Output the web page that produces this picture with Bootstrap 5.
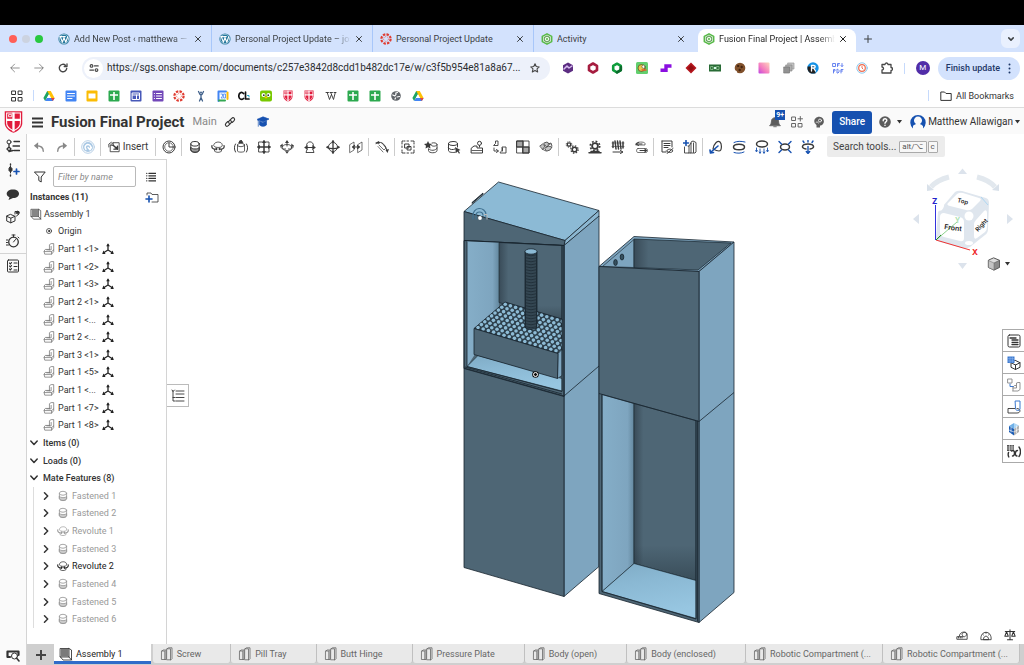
<!DOCTYPE html>
<html lang="en">
<head>
<meta charset="utf-8">
<meta name="viewport" content="width=device-width, initial-scale=1">
<title>Fusion Final Project | Assembly 1</title>
<link href="https://cdn.jsdelivr.net/npm/bootstrap@5.3.0/dist/css/bootstrap.min.css" rel="stylesheet">
<style>
:root{--ink:#333;--line:#d4d4d4;--onblue:#1651b0}
body{font-family:Roboto,"Liberation Sans",sans-serif;font-size:9px;line-height:12px;color:var(--ink);background:#fff;overflow:hidden}
svg{display:block;flex:none}
button,.btn{font-size:inherit;line-height:inherit}
.ib{border:0;background:none;padding:0;color:inherit;display:flex;align-items:center;justify-content:center;flex:none}
.i{width:14px;height:14px;fill:none;stroke:currentColor;stroke-width:1;stroke-linejoin:round;stroke-linecap:round}
.i12{width:12px;height:12px}.i10{width:10px;height:10px}.i8{width:8px;height:8px}
.i6{width:6px;height:6px}
.bold{stroke-width:1.6}
.screentop{height:25px;background:#000}
.tabstrip{height:27px;background:#d3e2fd;padding:0 4px 0 9px;color:#3c4043;font-size:9px}
.lights{width:42px;gap:5px}
.lights span{width:8px;height:8px;border-radius:50%}
.btab{flex:0 1 161px;min-width:0;height:27px;padding:0 9px 0 7px;gap:4px;border-right:1px solid #a8c7fa;color:inherit;text-decoration:none}
.sepless{border-right-color:transparent}
.btab .label{flex:1;min-width:0;overflow:hidden;white-space:nowrap}
.fade-r{-webkit-mask-image:linear-gradient(90deg,#000 86%,transparent);mask-image:linear-gradient(90deg,#000 86%,transparent)}
.active-tab{background:#fff;border-radius:8px 8px 0 0;border:0;color:#1f1f1f;flex-basis:158px;padding-left:5px;margin:4px 0 0 3px;height:23px;padding-bottom:4px}
.chev{width:19px;height:19px;border-radius:6px;background:#e9f0fe}
.navrow{height:32px;padding:0 4px 0 9px;color:#474747}
.addr{flex:0 1 468px;height:23px;background:#edf1fa;border-radius:12px;padding:0 10px 0 2px;margin-left:14px;gap:4px}
.addr .site{width:19px;height:19px;border-radius:50%;background:#fff}
.addr input{border:0;background:none;flex:1;min-width:0;padding:0;color:#2b2d30;font-size:10px;text-overflow:ellipsis;outline:0}
.exts{flex:0 1 331px;margin-left:12px}
.avatar{width:14px;height:14px;border-radius:50%;background:#512da8;color:#fff;font-size:8px}
.finish{height:23px;border:0;border-radius:12px;background:#d3e2fd;color:#1d3767;font-size:9px;font-weight:500;padding:0 9px 0 8px;gap:8px}
.marks{height:24px;padding:0 10px 0 11px;border-bottom:1px solid #dcdcdc}
.marks ul{flex:0 1 381px;margin:0}
.vline{width:1px;height:11px;background:#c6dafc}
.ohead{height:26px;background:#fafafa;padding:2px 4px 0}
.doc{font-size:15px;line-height:20px;font-weight:700}
.branch{margin-left:8px;font-size:11px;color:#888}
.badge9{position:absolute;left:6px;top:-6px;background:var(--onblue);color:#fff;font-size:7px;line-height:10px;padding:0 1px;font-weight:700}
.share{background:var(--onblue);color:#fff;border:0;border-radius:3px;width:40px;height:23px;font-size:10px;font-weight:500}
.rail{width:27px;background:#fafafa;border-right:1px solid var(--line);color:#333}
.rail .ib{width:26px;height:24px}
.tools{height:25px;color:#3a3a3a}
.tools .ib{width:23px;height:23px}
.tsep{width:1px;height:18px;background:#ccc;margin:0 1px;flex:none}
.searchbox{background:#ececec;border:0;border-radius:2px;height:21px;font-size:10px;padding:0 7px 0 6px;color:#444;gap:1px;white-space:nowrap}
.searchbox kbd{background:#f7f7f7;color:#555;border:1px solid #aaa;border-radius:1px;font:8px/10px Roboto,sans-serif;padding:0 2px}
.panel{width:140px;border-right:1px solid var(--line);border-top:1px solid var(--line);flex:none;padding-bottom:16px}
.filter{padding:4px 10px 0 7px;height:29px}
.filter input{width:83px;height:21px;border:1px solid #b9b9b9;border-radius:2px;padding:0 4px;font-size:9px;font-style:italic;margin:0 10px 0 7px}
.filter input::placeholder{color:#8a8a8a}
.insthead{padding:0 7px 0 3px;height:16px}
.tree{flex:1;margin:0;padding:0;list-style:none}
.tree li{flex:1 1 0;display:flex;align-items:center;white-space:nowrap}
.tree .lv0{padding-left:3px;gap:2px}
.tree .lv1{padding-left:16px;gap:3px}
.tree .lv1 .i:first-child{color:#777}
.tree .lv1 .i:last-child{color:#222}
.tree .nm{width:41px}
.tree .lv2{margin-left:6px;border-left:1px solid #ddd;padding-left:4px;gap:3px;color:#999}
.tree .lv2 .ib{width:16px;color:#333}
.tree .on{color:#222}
.sect{padding-left:3px;gap:5px;font-weight:500}
.stage{flex:1;min-width:0;position:relative}
.stage .model{position:absolute;inset:0;width:100%;height:100%}
.flyout{position:absolute;left:0;top:225px;width:22px;height:23px;border:1px solid #bbb;border-left:0;background:#fff}
.cube{position:absolute;right:6px;top:6px}
.cubemenu{position:absolute;right:13px;top:98px;gap:4px}
.dock{position:absolute;right:0;top:170px;width:22px;border:1px solid #aaa;border-right:0;background:#fff}
.dock .ib{height:22px;width:21px;border-bottom:1px solid #aaa}
.dock .ib:last-child{border:0}
.measure{position:absolute;right:8px;bottom:3px;gap:12px}
.tabbar{height:21px;background:#cfcfcf;overflow:hidden;color:#666}
.otab{flex:none;height:19px;background:#e9e9e9;border-right:1px solid #c0c0c0;border-radius:0 0 3px 3px;padding:1px 29px 0 7px;gap:3px;color:inherit;text-decoration:none;font-size:9px;white-space:nowrap}
.otab.long{padding-right:11px}
.otab.cur{background:#fff;color:#222;border:0;border-bottom:3px solid #2f6cc9;border-radius:0;height:20px;padding:2px 28px 0 5px;margin-right:2px}
.plus{width:27px;height:21px;color:#444}
</style>
</head>
<body class="d-flex flex-column vh-100">
<svg width="0" height="0" class="position-absolute" aria-hidden="true">
<defs>
<symbol id="x" viewBox="0 0 8 8"><path d="M1.500 1.500l5 5M6.500 1.500l-5 5"/></symbol>
<symbol id="wp" viewBox="0 0 12 12"><circle cx="6" cy="6" r="5.600" fill="#21759b" stroke="none"/><circle cx="6" cy="6" r="4.700" fill="none" stroke="#fff" stroke-width=".5"/><path d="M2.300 3.600l2.100 5.600L6 4.600l1.800 4.600 1.900-5.400M1.800 3.600h2.400M5 3.600h2.300" fill="none" stroke="#fff" stroke-width="1.100"/></symbol>
<symbol id="canvas" viewBox="0 0 12 12"><circle cx="6" cy="6" r="4.600" fill="none" stroke="#e03c31" stroke-width="2.200" stroke-dasharray="2.400 1.200" stroke-linecap="butt"/><circle cx="6" cy="6" r="2.400" fill="none" stroke="#e03c31" stroke-width=".8" stroke-dasharray=".8 1.100" stroke-linecap="butt"/></symbol>
<symbol id="onshape" viewBox="0 0 12 12"><path d="M6 .8l4.700 2.600v5.200L6 11.200 1.300 8.600V3.400z" fill="#eef8ea" stroke="#57b947" stroke-width="1.500"/><path d="M6 3l2.700 1.500v3L6 9 3.300 7.500v-3z" fill="none" stroke="#5e9f58" stroke-width="1.100"/><circle cx="6" cy="6" r="1" fill="#57b947" stroke="none"/></symbol>
<symbol id="drive" viewBox="0 0 12 12"><path d="M4.200 1h3.600L4 7.600 2.100 11 .4 8z" fill="#1fa463" stroke="none"/><path d="M4.200 1h3.600l3.800 7H8z" fill="#ffc107" stroke="none"/><path d="M11.600 8L9.900 11H2.100l1.800-3z" fill="#4285f4" stroke="none"/><path d="M8 8h3.600L9.900 11z" fill="#ea4335" stroke="none"/><path d="M6 4.400L8 8H4z" fill="#fff" stroke="none"/></symbol>
<symbol id="doc" viewBox="0 0 12 12"><rect x=".5" y=".5" width="11" height="11" rx="1" fill="#4285f4" stroke="none"/><path d="M2.500 3.500h7M2.500 6h7M2.500 8.500h4.500" stroke="#fff"/></symbol>
<symbol id="slides" viewBox="0 0 12 12"><rect x=".5" y=".5" width="11" height="11" rx="1" fill="#fbbc04" stroke="none"/><rect x="2.500" y="3.500" width="7" height="5" fill="#fff" stroke="none"/></symbol>
<symbol id="sheet" viewBox="0 0 12 12"><rect x=".5" y=".5" width="11" height="11" rx="1" fill="#2ca94f" stroke="none"/><path d="M2 5h8M6 2v8" stroke="#fff" stroke-width="1.600" stroke-linecap="butt"/></symbol>
<symbol id="sites" viewBox="0 0 12 12"><rect x=".5" y=".5" width="11" height="11" rx="1" fill="#4758b8" stroke="none"/><path d="M2.500 3h7v6.500h-7zM2.500 5h7M6.500 5v4" stroke="#fff" fill="none"/></symbol>
<symbol id="forms" viewBox="0 0 12 12"><rect x=".5" y=".5" width="11" height="11" rx="1" fill="#7248b9" stroke="none"/><path d="M4.500 3.500H9.500M4.500 6H9.500M4.500 8.500H9.500M2.300 3.500h.2M2.300 6h.2M2.300 8.500h.2" stroke="#fff"/></symbol>
<symbol id="shieldr" viewBox="0 0 18 22"><path d="M.7.7h16.600v11.500c0 4.500-4.600 7.700-8.300 9.100C5.300 19.900.700 16.700.700 12.200z" fill="#e11b3c" stroke="none"/><path d="M2.500 2.500h13v9.700c0 3.300-3.600 5.900-6.500 7.200-2.900-1.300-6.500-3.900-6.500-7.200z" fill="#e11b3c" stroke="#fff" stroke-width="1"/><path d="M9 2v18M2 9h14" stroke="#fff" stroke-width="2.200" fill="none"/><path d="M4.300 4h3v2h-3z" stroke="#fff" fill="none" stroke-width=".8"/></symbol>
<symbol id="part" viewBox="0 0 14 14"><path d="M7.500 8V2l2-1.300h3V10l-2.500 3H2L1.200 9.500l1.500-2H7.500M10 13V10H1.500M10 10l2.500-2M9.500 4v4H4.500" fill="none" stroke-width=".9"/></symbol>
<symbol id="mate" viewBox="0 0 12 12"><path d="M6 2v5M6 7l-4 2.500M6 7l4 2.500" stroke-width="1.300"/><path d="M6 .3l1.800 3H4.200zM.2 10.900l1.200-3.400 2.200 3.400zM11.800 10.900l-1.200-3.400-2.200 3.400z" fill="currentColor" stroke="none"/></symbol>
<symbol id="asm" viewBox="0 0 14 14"><path d="M2 2h7.500v7.500H2z" fill="currentColor" fill-opacity=".6" stroke="none"/><path d="M1.500 1.500h8.500v8.500H1.500zM10 1.500l2.500 1.500v10H4L1.500 10M10 10l2.500 3" stroke-width=".8"/></symbol>
<symbol id="fast" viewBox="0 0 14 14"><ellipse cx="7" cy="3.800" rx="4.200" ry="2.300"/><path d="M2.800 3.800v6c0 3.400 8.400 3.400 8.400 0v-6"/><path d="M2.800 7.500c1 2 7.400 2 8.400 0v2.700c-1 2.800-7.400 2.800-8.400 0z" fill="currentColor" fill-opacity=".5"/></symbol>
<symbol id="rev" viewBox="0 0 14 14"><path d="M2.800 5c0-4 8.400-4 8.400 0v1c-1 2-7.400 2-8.400 0zM3.500 9.500v1.700c1.500 1.500 5.500 1.500 7 0V9.500" stroke-width=".8"/><path d="M1 5.500c-1 3.500 3 4 4.500 3.500M13 5.500c1 3.500-3 4-4.500 3.500" stroke-width="1.200"/><path d="M4.800 7l2 2-2 1.800zM9.200 7l-2 2 2 1.800z" fill="currentColor" stroke="none"/></symbol>
<symbol id="slid" viewBox="0 0 14 14"><ellipse cx="7" cy="5" rx="3.500" ry="1.700" stroke-width=".8"/><path d="M3.500 5v6c0 1.500 7 1.500 7 0V5" stroke-width=".8"/><path d="M1.500 4c-1.500 2.500-1.500 5 0 8M12.500 4c1.500 2.500 1.500 5 0 8"/><path d="M7 0l1.800 2.500H5.200z" fill="currentColor"/></symbol>
<symbol id="plan" viewBox="0 0 14 14"><path d="M2 2h10v10H2z" stroke-width=".9"/><path d="M7 1v12M1 7h12" stroke-width="1.500"/><path d="M7 0l2 3H5zM7 14l-2-3h4zM0 7l3-2v4zM14 7l-3-2v4z" fill="currentColor" stroke="none"/></symbol>
<symbol id="cyl" viewBox="0 0 14 14"><ellipse cx="7" cy="7.500" rx="4.500" ry="3" stroke-width=".8"/><path d="M1 5.500c-1 3.500 3 4 4.500 3.500M13 5.500c1 3.500-3 4-4.500 3.500M7 2v4"/><path d="M7 0l2 3H5zM7 13.800l-2-2.500h4zM0 6l2.500-2.500.5 3.500zM14 6l-2.500-2.500L11 7z" fill="currentColor" stroke="none"/></symbol>
<symbol id="pins" viewBox="0 0 14 14"><path d="M3.500 5.500c0-5 7-5 7 0M4 9.500l-1 3h8l-1-3" stroke-width=".9"/><path d="M2 7.500h10M4.500 6L2 7.500 4.500 9M9.500 6L12 7.500 9.500 9" stroke-width="1.200"/></symbol>
<symbol id="ball" viewBox="0 0 14 14"><circle cx="7" cy="7" r="4.500" stroke-width=".9"/><path d="M7 1v12M1 7.500c3 1.500 9 1.500 12 0" stroke-width="1.300"/><path d="M7 0l1.800 2.500H5.200zM7 14l-1.800-2.500h3.600zM0 7l2.500-1.500v3zM14 7l-2.500-1.500v3z" fill="currentColor" stroke="none"/></symbol>
<symbol id="para" viewBox="0 0 14 14"><path d="M1 4.500l4-2.500v8L1 12.500zM9 4.500L13 2v8l-4 2.500z" stroke-width=".7"/><path d="M4 7h6M5.500 5.500L3.500 7l2 1.500M8.500 5.500l2 1.500-2 1.500" stroke-width="1.200"/></symbol>
<symbol id="tang" viewBox="0 0 14 14"><path d="M1 3.500c4-3 9-.5 11 7" /><path d="M4 5l5 5 2-2-4-5M3 6.500L8 12" stroke-width=".7"/><path d="M0 3l4-2 .5 3zM10.500 10l3.500-1-1.500 4z" fill="currentColor" stroke="none"/></symbol>
<symbol id="grp" viewBox="0 0 14 14"><path d="M1 4V1h3M10 1h3v3M13 10v3h-3M4 13H1v-3M6 1h2M6 13h2M1 6v2M13 6v2" stroke-dasharray="1.500 1"/><path d="M4 4h4v4H4zM6.500 6.500H10V10H6.500z"/></symbol>
<symbol id="starc" viewBox="0 0 14 14"><path d="M4 1l1.200 2.500L8 3.900 6 5.800l.5 2.700L4 7.200 1.500 8.500 2 5.800 0 3.900l2.800-.4z" fill="currentColor" stroke="none"/><path d="M8 3c2-.6 5 0 5 1.500S9 7 7.500 5.500M13 4.500v6c0 3-8.500 3-8.500 0V9M5 9c1 2 7 2 8-1" stroke-width=".9"/></symbol>
<symbol id="cylp" viewBox="0 0 14 14"><ellipse cx="6" cy="3.500" rx="4.500" ry="2"/><path d="M1.500 3.500v7c0 2 5 2.400 7 1.700M10.500 3.500V7M1.500 8c1 2 5 2 6.500 1"/><path d="M8 7l5.500 3-2 .8L13 13l-1 .7-1.400-2.200L9 13z" fill="currentColor" stroke="none"/></symbol>
<symbol id="lin" viewBox="0 0 14 14"><circle cx="9.500" cy="3.300" r="2"/><path d="M9.500 5.500V7M1.500 8L4 6h3v2h5.500v5h-11z"/><path d="M2 10.500h10" stroke-width=".8"/></symbol>
<symbol id="cpat" viewBox="0 0 14 14"><path d="M1 5l1.500-1.500V1H5v4.500H1zM7.500 12l1.500-1.500V7h4v6H7.500zM9.500 11V8M1 8v3h4M3.500 9.500L5.500 11l-2 1.500" stroke-width=".9"/></symbol>
<symbol id="quad" viewBox="0 0 14 14"><path d="M1 1h12v12H1zM7 1v12M1 7h12" stroke-width=".9"/><path d="M1 1h6v6H1zM7 7h6v6H7z" fill="currentColor" fill-opacity=".45"/></symbol>
<symbol id="pile" viewBox="0 0 14 14"><path d="M1 6l2.500-2L6 6 4 9zM5 3l3-1 2.500 2L8 7zM6 8l3-2 4 1-2 3-3 1zM9 4l3-1 1 3M3 9l4 2" fill="currentColor" fill-opacity=".3" stroke-width=".8"/></symbol>
<symbol id="gears" viewBox="0 0 14 14"><circle cx="4" cy="4.500" r="1.700" stroke-width="1.300"/><circle cx="4" cy="4.500" r="2.800" stroke-width="1" stroke-dasharray="1.100 1.100" stroke-linecap="butt"/><circle cx="9.500" cy="9.500" r="2.300" stroke-width="1.600"/><circle cx="9.500" cy="9.500" r="3.700" stroke-width="1.200" stroke-dasharray="1.450 1.450" stroke-linecap="butt"/></symbol>
<symbol id="rack" viewBox="0 0 14 14"><circle cx="7" cy="6" r="2.900" stroke-width="1.800"/><circle cx="7" cy="6" r="4.700" stroke-width="1.700" stroke-dasharray="1.800 1.890" stroke-linecap="butt"/><path d="M1 12.800h12M3 11.500h8" stroke-width="1.500"/></symbol>
<symbol id="screw" viewBox="0 0 14 14"><path d="M2 2v5.500M4 1l1 8M6.500 1l1 8M9 1l1 8M12 2v6" stroke-width="1.500"/><path d="M1 3h12M1 6.500h12" stroke-width=".6"/><path d="M2 12h9M9.500 10.500L12 12l-2.500 1.500" /></symbol>
<symbol id="belt" viewBox="0 0 14 14"><path d="M2 3.500c0-2 9-2 9 0v1.500H2zM4 8.500h8c2 0 2 4 0 4H4c-2 0-2-4 0-4z" stroke-width=".7"/><path d="M8 4H3M4.500 2.500L2 4l2.500 1.500M6 10.500h6M10.500 9l2.500 1.500-2.500 1.500"/></symbol>
<symbol id="sheetv" viewBox="0 0 14 14"><path d="M2 1h10v6M2 1v11h4M4 3.500h6M4 5.500h6M4 7.500h4"/><path d="M6.500 11c1.500-2.500 5-2.500 6.500 0-1.500 2-5 2-6.500 0M7 13.500l6-5"/></symbol>
<symbol id="newp" viewBox="0 0 14 14"><path d="M1.500 7v6H6V6h-1M6 6l2-3v10H6M8 3V2l2-1 3 1.500V12l-1 1H8M10.500 3v9.500" stroke-width=".9"/><path d="M3 .5v5M.5 3h5" stroke="#1651b0" stroke-width="1.600"/></symbol>
<symbol id="ex1" viewBox="0 0 14 14"><path d="M4 9C5 3 9 0 11 2s2 9-1 9-5-1.500-6-2z" stroke-width="1.200"/><path d="M9 6l-7 6M1 10l.5 3 3-.5" stroke="#1651b0" stroke-width="1.600"/></symbol>
<symbol id="ex2" viewBox="0 0 14 14"><ellipse cx="7" cy="7" rx="5.500" ry="2.800" stroke-width="1.500"/><path d="M2 2.500c3-1.500 7-1.500 11-.5M12 12c-3 1.500-7 1.500-10 .5" stroke="#1651b0"/></symbol>
<symbol id="ex3" viewBox="0 0 14 14"><ellipse cx="7" cy="4" rx="5.500" ry="3" stroke-width="1.500"/><path d="M1.500 8v3M5 9v3.500M9 9v3.500M12.500 8v3M.7 10.500l.8 1.500.8-1.500M4.200 12l.8 1.500.8-1.500M8.200 12l.8 1.500.8-1.500M11.700 10.500l.8 1.500.8-1.500" stroke="#1651b0" stroke-width=".9"/></symbol>
<symbol id="ex4" viewBox="0 0 14 14"><ellipse cx="7" cy="7" rx="4.500" ry="3" stroke-width="1.500"/><path d="M1 1.500l2.500 2.500M13 1.500L10.500 4M1 12.500L3.500 10M13 12.500L10.500 10" stroke="#1651b0" stroke-width="1.400"/></symbol>
<symbol id="ex5" viewBox="0 0 14 14"><path d="M5 9C0 8.500 0 4 7 4s7 4.500 2 5" stroke-width="1.500"/><path d="M7 6.500v6.500M5.300 11.500l1.700 2 1.700-2M2 1l1 1.500M7 0v2M12 1l-1 1.500" stroke="#1651b0" stroke-width="1.400"/></symbol>
<symbol id="studio" viewBox="0 0 12 14"><path d="M.8 4l1.500-1H5v9.500H.8zM.8 4H3.800v8.500M6 1.800L7.500.8h3.500v11l-1 1H6zM6 1.800h3.500v11" stroke-width=".8"/></symbol>
<symbol id="down" viewBox="0 0 8 8"><path d="M.8 2l3.200 3.500L7.200 2" stroke-width="1.500"/></symbol>
<symbol id="right" viewBox="0 0 8 8"><path d="M2.500 .8L5.700 4 2.500 7.200" stroke-width="1.500"/></symbol>
</defs></svg>

<div class="screentop flex-shrink-0"></div>

<nav class="tabstrip d-flex align-items-center flex-shrink-0" aria-label="Browser tabs">
<div class="lights d-flex flex-shrink-0"><span style="background:#ff5f57"></span><span style="background:#ccd3e0"></span><span style="background:#28c840"></span></div>
<a href="#" class="btab d-flex align-items-center"><svg class="i i12"><use href="#wp"/></svg><span class="label fade-r">Add New Post ‹ matthewa —</span><svg class="i i8"><use href="#x"/></svg></a>
<a href="#" class="btab d-flex align-items-center"><svg class="i i12"><use href="#wp"/></svg><span class="label fade-r">Personal Project Update – jos</span><svg class="i i8"><use href="#x"/></svg></a>
<a href="#" class="btab d-flex align-items-center"><svg class="i i12"><use href="#canvas"/></svg><span class="label">Personal Project Update</span><svg class="i i8"><use href="#x"/></svg></a>
<a href="#" class="btab sepless d-flex align-items-center"><svg class="i i12"><use href="#onshape"/></svg><span class="label">Activity</span><svg class="i i8"><use href="#x"/></svg></a>
<a href="#" class="btab active-tab d-flex align-items-center"><svg class="i i12"><use href="#onshape"/></svg><span class="label fade-r">Fusion Final Project | Assemb</span><svg class="i i8"><use href="#x"/></svg></a>
<button class="ib ms-2" aria-label="New tab"><svg class="i i8" viewBox="0 0 8 8"><path d="M4 .5v7M.5 4h7"/></svg></button>
<button class="ib chev ms-auto" aria-label="Search tabs"><svg class="i i6" viewBox="0 0 8 8"><path d="M1 2.500l3 3 3-3" stroke-width="2"/></svg></button>
</nav>

<div class="navrow d-flex align-items-center flex-shrink-0">
<button class="ib text-black-50" aria-label="Back"><svg class="i i12" viewBox="0 0 14 14"><path d="M12 7H2.500M6.500 2.500L2 7l4.500 4.500"/></svg></button>
<button class="ib text-black-50" style="margin-left:12px" aria-label="Forward"><svg class="i i12" viewBox="0 0 14 14"><path d="M2 7h9.500M7.500 2.500L12 7l-4.500 4.500"/></svg></button>
<button class="ib" style="margin-left:13px" aria-label="Reload"><svg class="i i10 bold" viewBox="0 0 12 12"><path d="M10.500 6.500A4.500 4.500 0 1 1 9 2.600M10.800 1v3.200H7.500"/></svg></button>
<div class="addr d-flex align-items-center"><span class="site d-flex align-items-center justify-content-center"><svg class="i i10" viewBox="0 0 12 12"><path d="M6.500 3.500H11M1 8.500h4.500" stroke-width="1.500"/><circle cx="3" cy="3.500" r="1.600" stroke-width="1.400"/><circle cx="9" cy="8.500" r="1.600" stroke-width="1.400"/></svg></span><input type="text" aria-label="Address" value="https://sgs.onshape.com/documents/c257e3842d8cdd1b482dc17e/w/c3f5b954e81a8a67..."><svg class="i i10" viewBox="0 0 12 12"><path d="M6 1l1.500 3.300 3.600.4-2.700 2.400.8 3.600L6 8.900l-3.200 1.800.8-3.600L.9 4.700l3.600-.4z" stroke-width="1.300"/></svg></div>
<div class="exts d-flex align-items-center justify-content-between">
<svg class="i i12" viewBox="0 0 12 12"><path d="M6 .5l5 2.700v5.600l-5 2.700-5-2.700V3.200z" fill="#5c2d82" stroke="none"/><path d="M2 7l3-3 2 2 3-2" stroke="#d7bdf0" stroke-width="1.500"/></svg>
<svg class="i i12" viewBox="0 0 12 12"><path d="M6 1.500l4 2.300v4.400l-4 2.300-4-2.300V3.800z" stroke="#a51c3f" stroke-width="2.600"/></svg>
<svg class="i i12" viewBox="0 0 12 12"><path d="M6 1.700l3.800 2.200v4.200L6 10.300 2.200 8.100V3.900z" stroke="#0f9d3c" stroke-width="2.600"/><path d="M9.800 5v3.100L6 10.300" stroke="#0a6b2c" stroke-width="2.600"/></svg>
<svg class="i i12" viewBox="0 0 12 12"><rect x="0" y="0" width="12" height="12" rx="1.500" fill="#62cf6e" stroke="none"/><circle cx="5.500" cy="6" r="3.500" fill="#e9c54f" stroke="#57481f" stroke-width=".7"/><circle cx="7.500" cy="4.700" r="1.600" fill="#fff" stroke="#57481f" stroke-width=".6"/><path d="M6 8h4" stroke="#e35c2c" stroke-width="1.500"/></svg>
<svg class="i i12" viewBox="0 0 12 12"><path d="M.5 8.200h5.500V4h5.500" fill="none" stroke="#8a0fe0" stroke-width="3.400" stroke-linecap="butt" stroke-linejoin="miter"/></svg>
<svg class="i i12" viewBox="0 0 12 12"><path d="M6 .5L11.500 6 6 11.500.5 6z" fill="#b3151c" stroke="none"/><path d="M6 3l3 3-3 3-3-3z" fill="#930d10" stroke="none"/></svg>
<svg class="i i12" viewBox="0 0 12 12"><rect x="0" y="2.500" width="12" height="7" fill="#286b35" stroke="none"/><path d="M2 4.500h2v3H2zM8 4.500h2v3H8z" stroke="#9fce9f" stroke-width=".7"/><circle cx="6" cy="6" r="1.200" fill="#dfe" stroke="none"/></svg>
<svg class="i i12" viewBox="0 0 12 12"><circle cx="6" cy="6" r="5.300" fill="#80502b" stroke="none"/><circle cx="4" cy="4" r=".7" stroke="#3a1e0c"/><circle cx="7.500" cy="5" r=".7" stroke="#3a1e0c"/><circle cx="5.500" cy="8" r=".7" stroke="#3a1e0c"/><circle cx="1.500" cy="10" r="1.500" fill="#fff" stroke="none"/></svg>
<svg class="i i12" viewBox="0 0 12 12"><defs><linearGradient id="pk" x1="1" y1="0" x2="0" y2="1"><stop offset="0" stop-color="#ffd7bd"/><stop offset=".6" stop-color="#f47ac0"/><stop offset="1" stop-color="#bd45e0"/></linearGradient></defs><rect x=".5" y=".5" width="11" height="11" rx="1" fill="url(#pk)" stroke="none"/></svg>
<svg class="i i12" viewBox="0 0 12 12"><path d="M5 1h6v6H5z" fill="#c5c5c5" stroke="#999" stroke-width=".7"/><path d="M3 3h6v6H3z" fill="#b0b0b0" stroke="#888" stroke-width=".7"/><path d="M1 5h5.500v6H1z" fill="#929292" stroke="#777" stroke-width=".7"/></svg>
<svg class="i i12" viewBox="0 0 12 12"><circle cx="6" cy="6" r="5.700" fill="#1592e6" stroke="none"/><path d="M.5 4.500h7l1 7H4C1.500 10.500 0 8 .5 4.500z" fill="#222" stroke="none"/><path d="M4.500 9V3.500h2.200c2 0 2 2.500 0 2.500H4.500M6.500 6l2 3" stroke="#fff" stroke-width="1.300"/></svg>
<svg class="i i12" viewBox="0 0 12 12"><path d="M1 1.500h2.500v3H1zM5.500 4.500v-3h2M5.500 3h1.500M10 1.500v3M9 3.500l1 1 1-1M1.500 11V7.500H3v1.500H1.500M5 7.500v3.500h1l1-1V8.500l-1-1zM9 11V7.500h2M9 9h1.500" stroke="#5776ee" stroke-width=".9"/></svg>
<svg class="i i12" viewBox="0 0 12 12"><circle cx="6" cy="6" r="5.200" stroke="#70bceb" stroke-width=".8"/><circle cx="6" cy="6" r="3.300" stroke="#ef6d50" stroke-width="1.200"/><path d="M6 4.500V6l1 1" stroke="#ef6d50"/></svg>
<svg class="i i12" viewBox="0 0 12 12"><path d="M1 2.500h3c0-2 3-2 3 0h3v3c2 0 2 3 0 3v2.500H1V8c2 0 2-3 0-3z" stroke-width="1.300"/></svg>
</div>
<span class="vline ms-auto"></span><span class="avatar d-flex align-items-center justify-content-center ms-auto me-2">M</span>
<button class="finish d-flex align-items-center">Finish update<svg width="3" height="11" viewBox="0 0 3 11" fill="#1d3767"><circle cx="1.500" cy="1.500" r="1"/><circle cx="1.500" cy="5.500" r="1"/><circle cx="1.500" cy="9.500" r="1"/></svg></button>
</div>

<div class="marks d-flex align-items-center flex-shrink-0">
<svg class="i i12" viewBox="0 0 12 12"><path d="M1 1h3.500v3.500H1zM7.500 1H11v3.500H7.500zM1 7.500h3.500V11H1zM7.500 7.500H11V11H7.500z"/></svg>
<span class="vline" style="margin:0 9px 0 10px"></span>
<ul class="list-unstyled d-flex align-items-center justify-content-between">
<li><svg class="i i12"><use href="#drive"/></svg></li><li><svg class="i i12"><use href="#doc"/></svg></li><li><svg class="i i12"><use href="#slides"/></svg></li><li><svg class="i i12"><use href="#sheet"/></svg></li><li><svg class="i i12"><use href="#sites"/></svg></li><li><svg class="i i12"><use href="#forms"/></svg></li><li><svg class="i i12"><use href="#canvas"/></svg></li>
<li><svg class="i i12" viewBox="0 0 12 12"><circle cx="6" cy="2.500" r="1" fill="#41618b" stroke="none"/><path d="M3.500 1.500L5 4.500h2l1.500-3M6 4.500v3L4.500 11M6 7.500L7.500 11" stroke="#41618b" stroke-width="1.300"/></svg></li>
<li><svg class="i i12" viewBox="0 0 12 12"><path d="M.5.500h11v11H.500z" fill="#fff" stroke="none"/><path d="M1.500 11V1.500H9" stroke="#4285f4" stroke-width="2"/><path d="M10.500 2.500V9" stroke="#fbbc04" stroke-width="2"/><path d="M2 10.500h6" stroke="#34a853" stroke-width="2"/><path d="M4 4h1.500v2L4 8h1.500M7 4h1.500v4H7z" stroke="#4285f4" stroke-width=".8"/></svg></li>
<li><svg class="i i12" viewBox="0 0 12 12"><path d="M5.500 3.500C3.500 1 .8 3 .8 6s2.700 4.500 4.700 2.500M7.500 2v7H11" stroke="#111" stroke-width="1.700"/><path d="M9.500 5.500h1.500V7" stroke="#1aa3c8"/></svg></li>
<li><svg class="i i12" viewBox="0 0 12 12"><rect y=".5" width="12" height="11" rx="2" fill="#78c800" stroke="none"/><circle cx="3.500" cy="5" r="2" fill="#fff" stroke="none"/><circle cx="8.500" cy="5" r="2" fill="#fff" stroke="none"/><circle cx="3.800" cy="5.200" r=".9" fill="#333" stroke="none"/><circle cx="8.200" cy="5.200" r=".9" fill="#333" stroke="none"/><path d="M5.300 7.500h1.400" stroke="#ffc200" stroke-width="1.500"/></svg></li>
<li><svg class="i i12"><use href="#shieldr"/></svg></li><li><svg class="i i12"><use href="#shieldr"/></svg></li>
<li><svg class="i i12" viewBox="0 0 12 12"><path d="M1 2.500h2.500M5 2.500h2.500M9 2.500h2M2.200 2.500l2.300 7 2-5M5.700 2.500l2.800 7 1.800-7" stroke="#333" stroke-width=".9"/></svg></li>
<li><svg class="i i12"><use href="#sheet"/></svg></li><li><svg class="i i12"><use href="#sheet"/></svg></li>
<li><svg class="i i12" viewBox="0 0 12 12"><circle cx="6" cy="6" r="4.800" fill="#5f6368" stroke="none"/><path d="M2.800 5l2 1L6 4.500 5.800 3l1.700-.5M7 7l2.500-.5M5 9L5.500 8" stroke="#fff" stroke-width="1.200"/></svg></li>
<li><svg class="i i12"><use href="#drive"/></svg></li>
</ul>
<span class="vline ms-auto me-2"></span>
<a href="#" class="d-flex align-items-center text-decoration-none text-reset" style="gap:4px;margin-left:3px"><svg class="i i12" viewBox="0 0 12 12"><path d="M.8 10V2h3.700L6 3.500h5.200V10z"/></svg>All Bookmarks</a>
</div>

<header class="ohead d-flex align-items-center flex-shrink-0">
<svg width="19" height="24" aria-label="School crest"><use href="#shieldr"/></svg>
<button class="ib ms-2" aria-label="Menu"><svg width="13" height="11" viewBox="0 0 13 11" stroke="#333" stroke-width="2"><path d="M1 1.500h11M1 5.500h11M1 9.500h11"/></svg></button>
<h1 class="doc mb-0" style="margin-left:7px">Fusion Final Project</h1><span class="branch">Main</span>
<svg class="i i12" style="margin-left:7px" viewBox="0 0 14 14"><path d="M6 8.500c-1-1-.8-2 0-2.800l3-3c2-1.800 4.500.5 2.800 2.600L9.500 7.600M8 5.500c1 1 .8 2 0 2.800l-3 3c-2 1.800-4.500-.5-2.800-2.600L4.500 6.400" stroke-width="1.300"/></svg>
<svg class="i i12" style="margin-left:21px" viewBox="0 0 14 14"><path d="M0 4l7-3 7 2.500L7 7zM3 6.500v4c2 2 6 2 8 0V5.500L7 8zM1.500 5v7" fill="#1651b0" stroke="#1651b0" stroke-width=".8"/></svg>
<div class="d-flex align-items-center ms-auto" style="gap:10px">
<span class="position-relative"><svg class="i i12" viewBox="0 0 14 14"><path d="M1 11c2-2 1.500-3 2-6 .8-4 7.200-4 8 0 .5 3 0 4 2 6zM5.500 12.500h3" fill="#5c5c5c" stroke="#5c5c5c"/></svg><span class="badge9">9+</span></span>
<svg class="i i12" viewBox="0 0 12 12" style="color:#666"><path d="M1 1h3.500v3.500H1zM1 7.500h3.500V11H1zM7.500 7.500H11V11H7.500zM9.300.5v4.500M7 2.800h4.500"/></svg>
<svg class="i i12" viewBox="0 0 12 12"><path d="M3.500 11.500V9C-1 6 2 .5 6.500.8c4 .2 5.500 4.700 3.500 7.200-1 1.300-2 1.500-3 1.500v2z" fill="#5c5c5c" stroke="none"/><circle cx="7" cy="4.500" r="1.500" stroke="#fff" stroke-width=".8"/><path d="M3 6.500c1-1 1.500-.5 2.500.5" stroke="#fff" stroke-width=".8"/></svg>
<button class="share" style="margin-left:-3px">Share</button>
<button class="ib" style="gap:6px;margin-left:-3px" aria-label="Help"><svg class="i i12" viewBox="0 0 12 12"><circle cx="6" cy="6" r="5.800" fill="#5c5c5c" stroke="none"/><path d="M4.200 4.700c0-2.700 3.800-2.500 3.600-.2C7.700 6 6 5.800 6 7.300M6 9.300v.1" stroke="#fff" stroke-width="1.400"/></svg><svg width="6" height="4"><path d="M0 0h5L2.500 3.500z" fill="#333"/></svg></button>
<button class="ib" style="gap:2px;font-size:10px;margin-left:-3px"><svg width="16" height="16" viewBox="0 0 16 16"><path d="M3 14.500A7.700 7.700 0 1 1 13 14.500V12C11 10 11 11 10 10a4 4 0 1 0-4 0c-1 1-3 .5-3 3z" fill="#1651b0"/></svg>Matthew Allawigan<svg width="5" height="4"><path d="M0 0h5L2.500 3.500z" fill="#333"/></svg></button>
</div>
</header>

<div class="d-flex flex-grow-1" style="min-height:0">
<aside class="rail d-flex flex-column flex-shrink-0">
<button class="ib" aria-label="Feature list"><svg class="i" viewBox="0 0 14 14"><circle cx="3" cy="3" r="2"/><path d="M3 5v3M1 10l2-2 2 2-2 2zM8 2.500h5.500M7 7h6.500M8 11.500h5.500M3 12.500l4-1" stroke-width="1.300"/></svg></button>
<button class="ib" aria-label="Insert feature"><svg class="i" viewBox="0 0 14 14"><path d="M4.500 1v1M4.500 12v1" stroke-width="1.400"/><path d="M4.500 4l1.500 1.500v2L4.500 9 3 7.500v-2zM4.500 3v7" fill="currentColor"/><path d="M10.500 6v5M8 8.500h5" stroke="#1651b0" stroke-width="1.700"/></svg></button>
<button class="ib" style="height:23px" aria-label="Comments"><svg class="i" viewBox="0 0 14 14"><path d="M7 2.500c8 0 8 8.500 0 8.500L2.500 13l1-2.700C-1.500 8 .5 2.500 7 2.500z" fill="currentColor" stroke="none"/></svg></button>
<button class="ib" aria-label="Parts"><svg class="i" viewBox="0 0 14 14"><path d="M4.800 4.500L9 6.300v4.600l-4.200 1.900L.7 11V6.300zM.7 6.300l4.100 1.900L9 6.300M4.800 8.200v4.600M9 4V1.500h4V4L10.500 6"/><circle cx="11.500" cy="2.500" r="1.300" fill="currentColor"/></svg></button>
<button class="ib" aria-label="History"><svg class="i" viewBox="0 0 14 14"><circle cx="7.500" cy="8" r="4.800" stroke-width="1.300"/><path d="M6 1h3M7.500 1v2M12 3l1 1M7.500 8l2-2.500M0 6h2M0 8.500h1.500M0 11h2.500"/></svg></button>
<hr class="m-0 opacity-100" style="border-color:#d4d4d4">
<button class="ib" aria-label="Custom tables"><svg class="i" viewBox="0 0 14 14"><rect x="1.500" y="1" width="11" height="12" rx="1"/><path d="M3.500 4l1 1 1-1.500M3.500 7l1 1 1-1.500M3.500 10l1 1 1-1.500M8 4h3M8 7.500h3M8 11h3" stroke-width="1.100"/></svg></button>
<button class="ib mt-auto" style="height:20px" aria-label="Find tab"><svg class="i" viewBox="0 0 14 14"><path d="M1.500 3.500h11v3.500M1.500 3.500V9h2.500" fill="none" stroke-width="2.200"/><circle cx="8.500" cy="8" r="3" fill="#fff"/><path d="M10.500 10l2.500 3" stroke-width="1.600"/></svg></button>
</aside>

<div class="d-flex flex-column flex-grow-1" style="min-width:0">
<div class="tools d-flex align-items-center flex-shrink-0" role="toolbar" aria-label="Assembly tools">
<button class="ib" aria-label="Undo" style="color:#888"><svg class="i i12" viewBox="0 0 14 14"><path d="M12 12c0-5-3-6.500-8-6.500" stroke-width="1.600"/><path d="M6 1.500L1 5.500l5 4z" fill="currentColor" stroke="none"/></svg></button>
<button class="ib" aria-label="Redo" style="color:#888"><svg class="i i12" viewBox="0 0 14 14"><path d="M2 12c0-5 3-6.500 8-6.500" stroke-width="1.600"/><path d="M8 1.500l5 4-5 4z" fill="currentColor" stroke="none"/></svg></button>
<span class="tsep"></span>
<button class="ib" aria-label="Update"><svg class="i" viewBox="0 0 14 14"><circle cx="7" cy="7" r="6.300" stroke="#b7cfe6"/><circle cx="7" cy="7" r="5" fill="#a9c8e4" stroke="none"/><path d="M5 9.500C2.500 6 6 3.500 8.500 5c1.500 1 1.500 3 .5 4M7 7.500L9 9.800l1.500-2.500" stroke="#fff" stroke-width="1.400"/></svg></button>
<span class="tsep"></span>
<button class="ib" style="width:52px;gap:3px;font-size:10px"><svg class="i i12" viewBox="0 0 14 14"><path d="M3 4.500L6 2h7v10.500H3zM1 7V3.500L4 1.500M6 2v3H3.500"/><path d="M6 5l5 4.500M11 6v3.500H7" stroke-width="1.700"/></svg>Insert</button>
<span class="tsep"></span>
<button class="ib" aria-label="Snapshot"><svg class="i" viewBox="0 0 14 14"><circle cx="7" cy="7" r="6"/><circle cx="7" cy="7" r="4.300" stroke-width=".7"/><path d="M7 3v4h4"/></svg></button>
<span class="tsep"></span>
<button class="ib" aria-label="Fastened mate"><svg class="i"><use href="#fast"/></svg></button><button class="ib" aria-label="Revolute mate"><svg class="i"><use href="#rev"/></svg></button><button class="ib" aria-label="Slider mate"><svg class="i"><use href="#slid"/></svg></button><button class="ib" aria-label="Planar mate"><svg class="i"><use href="#plan"/></svg></button><button class="ib" aria-label="Cylindrical mate"><svg class="i"><use href="#cyl"/></svg></button><button class="ib" aria-label="Pin slot mate"><svg class="i"><use href="#pins"/></svg></button><button class="ib" aria-label="Ball mate"><svg class="i"><use href="#ball"/></svg></button><button class="ib" aria-label="Parallel mate"><svg class="i"><use href="#para"/></svg></button>
<span class="tsep"></span>
<button class="ib" aria-label="Tangent mate"><svg class="i"><use href="#tang"/></svg></button>
<span class="tsep"></span>
<button class="ib" aria-label="Group"><svg class="i"><use href="#grp"/></svg></button><button class="ib" aria-label="Mate connector"><svg class="i"><use href="#starc"/></svg></button><button class="ib" aria-label="Replicate"><svg class="i"><use href="#cylp"/></svg></button><button class="ib" aria-label="Linear pattern"><svg class="i"><use href="#lin"/></svg></button><button class="ib" aria-label="Circular pattern"><svg class="i"><use href="#cpat"/></svg></button><button class="ib" aria-label="Standard content"><svg class="i"><use href="#quad"/></svg></button><button class="ib" aria-label="Exploded parts"><svg class="i"><use href="#pile"/></svg></button>
<span class="tsep"></span>
<button class="ib" aria-label="Gear relation"><svg class="i"><use href="#gears"/></svg></button><button class="ib" aria-label="Rack relation"><svg class="i"><use href="#rack"/></svg></button><button class="ib" aria-label="Screw relation"><svg class="i"><use href="#screw"/></svg></button><button class="ib" aria-label="Linear relation"><svg class="i"><use href="#belt"/></svg></button>
<span class="tsep"></span>
<button class="ib" aria-label="Named views"><svg class="i"><use href="#sheetv"/></svg></button><button class="ib" aria-label="New part"><svg class="i"><use href="#newp"/></svg></button>
<span class="tsep"></span>
<button class="ib" aria-label="Force"><svg class="i"><use href="#ex1"/></svg></button><button class="ib" aria-label="Torque"><svg class="i"><use href="#ex2"/></svg></button><button class="ib" aria-label="Pressure"><svg class="i"><use href="#ex3"/></svg></button><button class="ib" aria-label="Moment"><svg class="i"><use href="#ex4"/></svg></button><button class="ib" aria-label="Gravity"><svg class="i"><use href="#ex5"/></svg></button>
<button class="searchbox d-flex align-items-center ms-2">Search tools...<kbd style="margin-left:2px">alt/⌥</kbd><kbd>c</kbd></button>
</div>

<div class="d-flex flex-grow-1" style="min-height:0">
<section class="panel d-flex flex-column">
<div class="filter d-flex align-items-center flex-shrink-0"><svg class="i i12" viewBox="0 0 12 12"><path d="M.8 1h10.400L7.200 6v5L4.800 9.500V6z"/></svg><input type="text" placeholder="Filter by name" aria-label="Filter by name"><svg class="i i10" viewBox="0 0 12 12"><path d="M3.500 1.500H12M3.500 4.500H12M3.500 7.500H12M3.500 10.500H12M.8 1.500h.2M.8 4.500h.2M.8 7.500h.2M.8 10.500h.2" stroke-width="1.500"/></svg></div>
<div class="insthead d-flex align-items-center justify-content-between flex-shrink-0"><b>Instances (11)</b><svg class="i" viewBox="0 0 14 14"><path d="M2 5V3h4l1 1.500h6V12H7" stroke-width=".8"/><path d="M4 6v6M1 9h6" stroke="#1651b0" stroke-width="1.600"/></svg></div>
<ul class="tree d-flex flex-column">
<li class="lv0"><svg class="i i12"><use href="#asm"/></svg>Assembly 1</li>
<li class="lv1"><svg class="i i12" viewBox="0 0 12 12"><circle cx="6" cy="6" r="2.500" stroke-width=".7"/><circle cx="6" cy="6" r=".5" fill="#333"/></svg>Origin</li>
<li class="lv1"><svg class="i i12"><use href="#part"/></svg><span class="nm">Part 1 &lt;1&gt;</span><svg class="i i12"><use href="#mate"/></svg></li>
<li class="lv1"><svg class="i i12"><use href="#part"/></svg><span class="nm">Part 1 &lt;2&gt;</span><svg class="i i12"><use href="#mate"/></svg></li>
<li class="lv1"><svg class="i i12"><use href="#part"/></svg><span class="nm">Part 1 &lt;3&gt;</span><svg class="i i12"><use href="#mate"/></svg></li>
<li class="lv1"><svg class="i i12"><use href="#part"/></svg><span class="nm">Part 2 &lt;1&gt;</span><svg class="i i12"><use href="#mate"/></svg></li>
<li class="lv1"><svg class="i i12"><use href="#part"/></svg><span class="nm">Part 1 &lt;...</span><svg class="i i12"><use href="#mate"/></svg></li>
<li class="lv1"><svg class="i i12"><use href="#part"/></svg><span class="nm">Part 2 &lt;...</span><svg class="i i12"><use href="#mate"/></svg></li>
<li class="lv1"><svg class="i i12"><use href="#part"/></svg><span class="nm">Part 3 &lt;1&gt;</span><svg class="i i12"><use href="#mate"/></svg></li>
<li class="lv1"><svg class="i i12"><use href="#part"/></svg><span class="nm">Part 1 &lt;5&gt;</span><svg class="i i12"><use href="#mate"/></svg></li>
<li class="lv1"><svg class="i i12"><use href="#part"/></svg><span class="nm">Part 1 &lt;...</span><svg class="i i12"><use href="#mate"/></svg></li>
<li class="lv1"><svg class="i i12"><use href="#part"/></svg><span class="nm">Part 1 &lt;7&gt;</span><svg class="i i12"><use href="#mate"/></svg></li>
<li class="lv1"><svg class="i i12"><use href="#part"/></svg><span class="nm">Part 1 &lt;8&gt;</span><svg class="i i12"><use href="#mate"/></svg></li>
<li class="sect"><svg class="i i8"><use href="#down"/></svg>Items (0)</li>
<li class="sect"><svg class="i i8"><use href="#down"/></svg>Loads (0)</li>
<li class="sect"><svg class="i i8"><use href="#down"/></svg>Mate Features (8)</li>
<li class="lv2"><span class="ib"><svg class="i i8"><use href="#right"/></svg></span><svg class="i i12"><use href="#fast"/></svg>Fastened 1</li>
<li class="lv2"><span class="ib"><svg class="i i8"><use href="#right"/></svg></span><svg class="i i12"><use href="#fast"/></svg>Fastened 2</li>
<li class="lv2"><span class="ib"><svg class="i i8"><use href="#right"/></svg></span><svg class="i i12"><use href="#rev"/></svg>Revolute 1</li>
<li class="lv2"><span class="ib"><svg class="i i8"><use href="#right"/></svg></span><svg class="i i12"><use href="#fast"/></svg>Fastened 3</li>
<li class="lv2 on"><span class="ib"><svg class="i i8"><use href="#right"/></svg></span><svg class="i i12"><use href="#rev"/></svg>Revolute 2</li>
<li class="lv2"><span class="ib"><svg class="i i8"><use href="#right"/></svg></span><svg class="i i12"><use href="#fast"/></svg>Fastened 4</li>
<li class="lv2"><span class="ib"><svg class="i i8"><use href="#right"/></svg></span><svg class="i i12"><use href="#fast"/></svg>Fastened 5</li>
<li class="lv2"><span class="ib"><svg class="i i8"><use href="#right"/></svg></span><svg class="i i12"><use href="#fast"/></svg>Fastened 6</li>
</ul>
</section>

<main class="stage">
<svg class="model" viewBox="167 160 857 484" role="img" aria-label="Two cabinet towers">
<defs>
<linearGradient id="lw" x1="0" x2="1" y1="0" y2="0"><stop offset="0" stop-color="#85aec8"/><stop offset=".8" stop-color="#7ea5bf"/><stop offset="1" stop-color="#64889f"/></linearGradient>
<linearGradient id="bw" x1="0" x2="1" y1="0" y2="0"><stop offset="0" stop-color="#394b58"/><stop offset=".15" stop-color="#4e6675"/><stop offset="1" stop-color="#4e6675"/></linearGradient>
<linearGradient id="fl" x1="0" x2=".3" y1="0" y2="1"><stop offset="0" stop-color="#7fabc5"/><stop offset=".4" stop-color="#8ab8d3"/><stop offset="1" stop-color="#97c6e1"/></linearGradient>
<linearGradient id="sh" x1="0" x2="0" y1="0" y2="1"><stop offset=".8" stop-color="#1a2830" stop-opacity="0"/><stop offset="1" stop-color="#1a2830" stop-opacity=".4"/></linearGradient>
<pattern id="thread" width="12" height="3" patternUnits="userSpaceOnUse" patternTransform="translate(525 250)"><path d="M0 0h12v3H0z" fill="#22313b"/><path d="M1 .8q5 2 10 0" stroke="#4d6473" fill="none" stroke-width=".8"/></pattern>
<clipPath id="trayclip"><path d="M474 329l31-26.500 57 17V351l-4 3z"/></clipPath>
</defs>
<g stroke="#18252e" stroke-width=".8" stroke-linejoin="round">
<path d="M472 203l11-9.500v1l-11 9.500z" fill="#18252e"/>
<path d="M464 212l34.500-29.500L599 211l-34 30z" fill="#8cbad5"/>
<path d="M565 241l34-30v6l-35 29z" fill="#8cb7d1"/>
<path d="M564 246l35-29.500V567l-35 30z" fill="#7ea5bf"/>
<path d="M464 212l101 29-1 5-100-5z" fill="#4e6675"/>
<path d="M464 241l100 5v351l-100-29z" fill="#4e6675"/>
<path d="M467 242l32 1v60l-32 64z" fill="url(#lw)" stroke="none"/><path d="M467 242l32 1v75l-32 49z" fill="url(#lw)" stroke="none"/>
<path d="M499 243l63 3v76l-63-19z" fill="url(#bw)" stroke-width=".6"/><path d="M499 243l63 3v76l-63-19z" fill="url(#sh)" stroke="none"/>
<path d="M467 367l11-11 84 23v12.500z" fill="url(#fl)" stroke-width=".6"/>
<path d="M474 329l31-26.500 57 17V351l-4 3z" fill="#2d3f4b"/>
<g id="pillrows" clip-path="url(#trayclip)" fill="#8dbbd5" stroke="none"></g>
<path d="M558 354l4-4v26l-4.500 3z" fill="#7ea5bf" stroke-width=".6"/>
<path d="M474 329l84 25-.5 25-83.500-24z" fill="#4e6675"/>
<path d="M525 252v76q6 4 12 0v-76z" fill="url(#thread)"/><ellipse cx="531" cy="252" rx="6" ry="2.700" fill="#8cbad5"/>
<path d="M464 241l100 5v151l-100-28zM467 242v125l95 25V246" fill="none"/>
<path d="M464 368.500l100 28 35-30M465 367.500l97 27" fill="none"/>
</g>
<path d="M473 220v-4a6.500 6.500 0 0 1 13-1v4M476 220v-4a3.500 3.500 0 0 1 7 0" fill="none" stroke="#427291" stroke-width="1.200"/><circle cx="480" cy="218.500" r="1.900" fill="#fff"/><path d="M484 215h3v5" fill="none" stroke="#bbb"/>
<circle cx="535.500" cy="375" r="3.300" fill="#111"/><circle cx="535.500" cy="375" r="2" fill="none" stroke="#fff" stroke-width="1"/>
<g stroke="#18252e" stroke-width=".8" stroke-linejoin="round">
<path d="M599 267l35-30 100 5.500-35 29.500z" fill="#7ea5bf"/>
<path d="M602.500 267l31.500-27v28z" fill="#7ea5bf" stroke-width=".6"/>
<path d="M634 239.500l97 4-33 27-64-2.500z" fill="url(#bw)" stroke-width=".7"/>
<ellipse cx="615.500" cy="263" rx="1.800" ry="3" fill="#35505f"/><ellipse cx="622" cy="257.500" rx="1.800" ry="3" fill="#35505f"/>
<path d="M699 272l35-29.500V593l-35 30z" fill="#7ea5bf"/>
<path d="M599 267l100 5v351l-100-29z" fill="#4e6675"/>
<path d="M602 395l32 9v160l-32 28z" fill="url(#lw)" stroke-width=".6"/>
<path d="M634 404l62 17v160l-62-17z" fill="url(#bw)" stroke-width=".6"/><path d="M634 404l62 17v160l-62-17z" fill="url(#sh)" stroke="none"/>
<path d="M602 592l32-28 62 17v38z" fill="url(#fl)" stroke-width=".6"/>
<path d="M602 395v197l94 27.500V421M599 394l100 28 35-29M697.500 421v201" fill="none"/>
</g>
</svg>
<button class="ib flyout" aria-label="Toggle list"><svg class="i" viewBox="0 0 14 14"><path d="M5 2h8M5 5h8M5 8.500h8M5 12h8M2 2v10h2M2 8.500h2M1 1l1 1.500L3.500 1" stroke-width=".9"/></svg></button>
<svg class="cube" width="108" height="112" viewBox="910 166 108 112" font-family="Inter,sans-serif">
<path d="M958 175h9l-4.500-5.500zM958 264h9l-4.500 6zM913 220l6-5v10zM1013 220l-6-5v10z" fill="#dce3ec"/>
<path d="M949 178q-12 3-18 10M977 178q12 3 18 10" fill="none" stroke="#e2e8ee" stroke-width="5"/><path d="M927 185v7l7-1zM999 185v7l-7-1z" fill="#d9e1ea"/>
<path d="M938 213l17-20q3-2 7-1l24 7q3 1 3 5l-1 26q0 4-3 6l-15 12q-4 2-8 1l-22-6q-4-1-4-5z" fill="#dfe6ee"/>
<path d="M944 214l16 4q4 1 4 5v16q0 4-4 3l-16-4q-4-1-4-5v-15q0-4 4-4zM948 204l9-9q3-2 6-1l16 5q3 1 1 3l-8 8q-3 2-6 1l-16-4q-4-1-2-3zM976 221l8-9q3-2 3 2v14q0 3-2 5l-8 6q-3 2-3-2v-12q0-2 2-4z" fill="#fff"/>
<circle cx="969" cy="217" r="4.500" fill="#fff"/><ellipse cx="941" cy="208" rx="2.500" ry="4" fill="#fff" transform="rotate(30 941 208)"/><ellipse cx="969" cy="244" rx="4" ry="2" fill="#fff"/><path d="M981 198l7 8" stroke="#aed6f2"/>
<path d="M935.500 206v35" stroke="#3333dd"/><path d="M936 241l34 10" stroke="#e33"/><path d="M936 241l21-18" stroke="#8ed28e"/><path d="M936 241l5-5" stroke="#228b22"/>
<g font-size="7" font-weight="600" fill="#222"><text x="944" y="230" transform="rotate(8 944 230)">Front</text><text x="957" y="203" font-size="6" transform="rotate(14 957 203)">Top</text><text x="978" y="233" font-size="6" transform="rotate(-48 978 233)">Right</text></g>
<g font-size="8" font-weight="700"><text x="932" y="205" fill="#22c">Z</text><text x="972" y="256" fill="#e22">X</text><text x="955" y="224" fill="#a9dfae" font-size="7">Y</text></g>
</svg>
<button class="ib cubemenu" aria-label="View options"><svg class="i" viewBox="0 0 14 14"><path d="M7 1l5.500 2.300v7L7 13 1.500 10.500v-7z" fill="#ddd" stroke="#555"/><path d="M7 6l5.500-2.700v7L7 13z" fill="#8b8b8b" stroke="#555" stroke-width=".6"/><path d="M1.500 3.500L7 6v7l-5.500-2.500z" fill="#c4c4c4" stroke="#777" stroke-width=".6"/></svg><svg width="6" height="4"><path d="M0 0h5L2.500 3.500z" fill="#333"/></svg></button>
<div class="dock">
<button class="ib" aria-label="Configurations"><svg class="i" viewBox="0 0 14 14"><rect x="1" y="1" width="12" height="12" rx="1.500"/><path d="M3 4h6M5 6h6M5 8.300h6M5 10.500h6" stroke-width="1.300"/></svg></button>
<button class="ib" aria-label="Appearances"><svg class="i" viewBox="0 0 14 14"><path d="M8.500 4.500L13 6.700v4.600L8.500 13.500 4 11.300V6.700zM4 6.700L8.500 9 13 6.700M8.500 9v4.500"/><path d="M.5.500h7V7h-7z" fill="#3b78cf" stroke="none"/><path d="M.5 2.700h7M.5 5h7M3 .5V7M5.300.5V7" stroke="#9fc2f0" stroke-width=".5"/></svg></button>
<button class="ib" style="color:#888" aria-label="References"><svg class="i" viewBox="0 0 14 14"><path d="M1 1h4v4H1zM6 12.500V9l1.500-1.500h2V5l1.500-.5h2v7l-2 1.500H6zM9.500 7.500V10H6" stroke-width=".9"/><path d="M3 6v2.500h3" stroke="#3b78cf"/></svg></button>
<button class="ib" aria-label="Bend table"><svg class="i" viewBox="0 0 14 14"><path d="M8 8.500H1V13h9c4 0 4-4.500 0-4.500" stroke-width=".9"/><path d="M8.500 1H13v8c0 2-4.500 2-4.500 0z" stroke="#3b78cf"/></svg></button>
<button class="ib" aria-label="Simulation"><svg class="i" viewBox="0 0 14 14"><path d="M7 7V1l5 2.500z" fill="#aed6f5" stroke="none"/><path d="M7 7V1L2 4z" fill="#6fb1e8" stroke="none"/><path d="M7 7L2 4v6l5 3.500z" fill="#1b5cb3" stroke="none"/><path d="M7 7l5-3.500V10l-5 3.500z" fill="#b2b2b2" stroke="none"/><path d="M4 5v5M9.500 4v7M2 8l5 2 5-3" stroke="#fff" stroke-width=".6"/></svg></button>
<button class="ib" aria-label="Variables"><svg class="i" viewBox="0 0 14 14"><path d="M0 1h7v6H0z" fill="#555" stroke="none"/><path d="M0 3h7M0 5h7M2.500 1v6M5 1v6" stroke="#fff" stroke-width=".5"/><path d="M1.500 8.500c-.5 1.500-.5 3 .3 4.500M12 3c2 2.500 2 7 0 9.500M4.500 7c2-1 3 0 3 2S7 12 5.500 12M10.500 6.500c-2.500 0-3 5.500-.5 5.500" stroke-width="1.400"/></svg></button>
</div>
<div class="measure d-flex align-items-center">
<svg class="i i12" viewBox="0 0 14 14"><path d="M4 8c0-5 8-6 9-2v6H1V9h9c3-1 3-5 0-5S6 7 8 8M3 9v1.500M5 9v1.500M7 9v1.500"/></svg>
<svg class="i i12" viewBox="0 0 14 14"><path d="M1 12C0 1 14 1 13 12zM4 12c0-5 6-5 6 0zM7 4v1M3 6l1 1M11 6l-1 1"/></svg>
<svg class="i i12" viewBox="0 0 14 14"><path d="M7 1v11.500M4 12.500h6M1.500 3h11M3 3L1 8.500h4L3 3M11 3L9 8.500h4L11 3" stroke-width="1.200"/></svg>
</div>
</main>
</div>

<nav class="tabbar d-flex align-items-start flex-shrink-0" aria-label="Document tabs">
<button class="ib plus" aria-label="Add tab"><svg class="i i10" viewBox="0 0 10 10"><path d="M5 .5v9M.5 5h9" stroke-width="2"/></svg></button>
<a href="#" class="otab cur d-flex align-items-center"><svg class="i"><use href="#asm"/></svg>Assembly 1</a>
<a href="#" class="otab d-flex align-items-center"><svg class="i"><use href="#studio"/></svg>Screw</a>
<a href="#" class="otab d-flex align-items-center"><svg class="i"><use href="#studio"/></svg>Pill Tray</a>
<a href="#" class="otab d-flex align-items-center"><svg class="i"><use href="#studio"/></svg>Butt Hinge</a>
<a href="#" class="otab d-flex align-items-center"><svg class="i"><use href="#studio"/></svg>Pressure Plate</a>
<a href="#" class="otab d-flex align-items-center"><svg class="i"><use href="#studio"/></svg>Body (open)</a>
<a href="#" class="otab d-flex align-items-center"><svg class="i"><use href="#studio"/></svg>Body (enclosed)</a>
<a href="#" class="otab long d-flex align-items-center"><svg class="i"><use href="#studio"/></svg>Robotic Compartment (...</a>
<a href="#" class="otab long d-flex align-items-center"><svg class="i"><use href="#studio"/></svg>Robotic Compartment (...</a>
</nav>
</div>
</div>
<script src="https://cdn.jsdelivr.net/npm/bootstrap@5.3.0/dist/js/bootstrap.bundle.min.js"></script>
<script>
// Pill cups on the tray: a grid along the tray's front edge and its depth
const rows = document.getElementById('pillrows');
for (let r = 0; r < 9; r++) for (let c = 0; c < 17; c++) {
  const dot = document.createElementNS('http://www.w3.org/2000/svg', 'circle');
  dot.setAttribute('cx', 478 + c * 5.2 + r * 3.4);
  dot.setAttribute('cy', 328 + c * 1.55 - r * 2.9);
  dot.setAttribute('r', 1.8);
  rows.append(dot);
}
</script>
</body>
</html>
